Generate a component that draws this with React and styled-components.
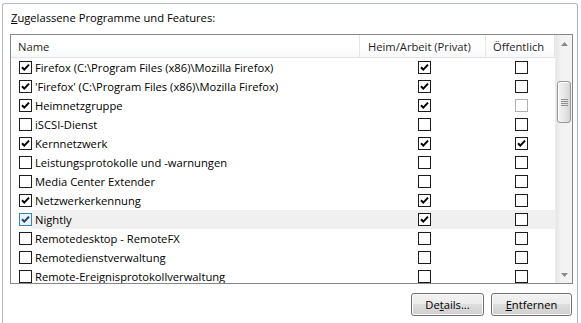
import React from 'react';
import styled, { createGlobalStyle } from 'styled-components';

const GlobalStyle = createGlobalStyle`
  html, body {
    margin: 0;
    padding: 0;
    background: #ffffff;
  }
  body {
    font-family: 'Open Sans', 'Noto Sans', 'Liberation Sans', sans-serif;
    font-size: 11.2px;
    color: #000000;
  }
`;

const Page = styled.div`
  width: 581px;
  height: 323px;
  overflow: hidden;
  padding: 3px 0 0 2px;
  box-sizing: border-box;
`;

const Frame = styled.div`
  width: 576px;
  height: 340px;
  box-sizing: border-box;
  border: 1px solid #b4b7d0;
  border-right-color: #a7a9d6;
  border-radius: 3px 3px 0 0;
  padding: 6px 0 0 7px;
`;

const Title = styled.div`
  height: 15px;
  line-height: 15px;
  padding-left: 1px;
  u {
    text-decoration: underline;
  }
`;

const ListBox = styled.div`
  margin-top: 9px;
  width: 563px;
  height: 250px;
  box-sizing: border-box;
  border: 1px solid #828790;
  display: flex;
  overflow: hidden;
`;

const Content = styled.div`
  flex: 1;
  display: flex;
  flex-direction: column;
  overflow: hidden;
`;

const Header = styled.div`
  display: flex;
  height: 23px;
  box-sizing: border-box;
  border-bottom: 1px solid #e2e2e2;
  background: linear-gradient(#ffffff, #ffffff 60%, #f7f8fa);
  flex-shrink: 0;
`;

const HeadCell = styled.div`
  width: ${(p) => p.w}px;
  box-sizing: border-box;
  padding-left: ${(p) => p.pad}px;
  border-right: 1px solid #e5e5e5;
  display: flex;
  align-items: center;
  color: #1e1e1e;
  white-space: nowrap;
`;

const Row = styled.div`
  display: flex;
  height: 19px;
  flex-shrink: 0;
  align-items: center;
`;

const NameCell = styled.div`
  width: 349px;
  height: 100%;
  display: flex;
  align-items: center;
  padding-left: 8px;
  box-sizing: border-box;
  white-space: nowrap;
`;

const Label = styled.span`
  flex: 1;
  height: 100%;
  display: flex;
  align-items: center;
  padding-left: 3px;
  background: ${(p) => (p.hot ? '#f0f0f0' : 'transparent')};
`;

const CheckCell = styled.div`
  width: ${(p) => p.w}px;
  height: 100%;
  display: flex;
  align-items: center;
  justify-content: center;
  padding-left: ${(p) => p.shift || 0}px;
  box-sizing: border-box;
  background: ${(p) => (p.hot ? '#f0f0f0' : 'transparent')};
`;

const Box = styled.span`
  width: 13px;
  height: 13px;
  box-sizing: border-box;
  border: 1px solid ${(p) => (p.disabled ? '#b1b1b1' : p.hot ? '#3c7fb1' : '#1c1c1c')};
  background: ${(p) => (p.hot ? '#e9f3fb' : '#ffffff')};
  display: inline-flex;
  align-items: center;
  justify-content: center;
  flex-shrink: 0;
`;

const Check = ({ on, disabled, hot }) => (
  <Box disabled={disabled} hot={hot}>
    {on && (
      <svg width="11" height="11" viewBox="0 0 11 11">
        <path
          d="M2 5.2 L4.3 7.6 L9 2.6"
          fill="none"
          stroke={hot ? '#1d3f6b' : '#000'}
          strokeWidth="2"
        />
      </svg>
    )}
  </Box>
);

const ScrollBar = styled.div`
  width: 17px;
  display: flex;
  flex-direction: column;
  background: linear-gradient(90deg, #e6e6e6, #f2f2f2 30%, #f4f4f4);
  border-left: 1px solid #ececec;
  box-sizing: border-box;
  flex-shrink: 0;
`;

const Arrow = styled.div`
  height: 17px;
  display: flex;
  align-items: center;
  justify-content: center;
  flex-shrink: 0;
`;

const Thumb = styled.div`
  margin: 29px 1px 0 1px;
  height: 42px;
  box-sizing: border-box;
  border: 1px solid #979797;
  border-radius: 3px;
  background: linear-gradient(90deg, #f3f3f3, #e6e6e6 55%, #d5d5d5);
  box-shadow: inset 1px 1px 0 #ffffff;
  display: flex;
  align-items: center;
  justify-content: center;
`;

const Track = styled.div`
  flex: 1;
`;

const Buttons = styled.div`
  width: 562px;
  margin-top: 9px;
  display: flex;
  justify-content: flex-end;
  gap: 7px;
`;

const Button = styled.button`
  width: ${(p) => p.w}px;
  height: 23px;
  box-sizing: border-box;
  border: 1px solid #707070;
  border-radius: 3px;
  background: linear-gradient(#f2f2f2, #ebebeb 50%, #dddddd 50%, #cfcfcf);
  box-shadow: inset 0 0 0 1px #fcfcfc;
  font-family: inherit;
  font-size: 11.2px;
  color: #000;
  padding: 0;
  u {
    text-decoration: underline;
  }
`;

const rows = [
  { name: 'Firefox (C:\\Program Files (x86)\\Mozilla Firefox)', a: true, b: true, c: false },
  { name: "'Firefox' (C:\\Program Files (x86)\\Mozilla Firefox)", a: true, b: true, c: false },
  { name: 'Heimnetzgruppe', a: true, b: true, c: false, cDis: true },
  { name: 'iSCSI-Dienst', a: false, b: false, c: false },
  { name: 'Kernnetzwerk', a: true, b: true, c: true },
  { name: 'Leistungsprotokolle und -warnungen', a: false, b: false, c: false },
  { name: 'Media Center Extender', a: false, b: false, c: false },
  { name: 'Netzwerkerkennung', a: true, b: true, c: false },
  { name: 'Nightly', a: true, b: true, c: false, hot: true },
  { name: 'Remotedesktop - RemoteFX', a: false, b: false, c: false },
  { name: 'Remotedienstverwaltung', a: false, b: false, c: false },
  { name: 'Remote-Ereignisprotokollverwaltung', a: false, b: false, c: false },
];

const Tri = ({ down }) => (
  <svg width="7" height="4" viewBox="0 0 7 4">
    <path d={down ? 'M0 0 H7 L3.5 4 Z' : 'M0 4 H7 L3.5 0 Z'} fill="#8a8a8a" />
  </svg>
);

const Grip = () => (
  <svg width="7" height="7" viewBox="0 0 7 7">
    <path d="M0 0.5 H7 M0 2.5 H7 M0 4.5 H7 M0 6.5 H7" stroke="#8f8f8f" strokeWidth="1" />
  </svg>
);

export default function App() {
  return (
    <Page>
      <GlobalStyle />
      <Frame>
        <Title>
          <u>Z</u>ugelassene Programme und Features:
        </Title>
        <ListBox>
          <Content>
            <Header>
              <HeadCell w={349} pad={7}>Name</HeadCell>
              <HeadCell w={126} pad={8}>Heim/Arbeit (Privat)</HeadCell>
              <HeadCell w={69} pad={7}>Öffentlich</HeadCell>
            </Header>
            {rows.map((r) => (
              <Row key={r.name}>
                <NameCell>
                  <Check on={r.a} hot={r.hot} />
                  <Label hot={r.hot}>{r.name}</Label>
                </NameCell>
                <CheckCell w={126} shift={3} hot={r.hot}>
                  <Check on={r.b} />
                </CheckCell>
                <CheckCell w={69} shift={1} hot={r.hot}>
                  <Check on={r.c} disabled={r.cDis} />
                </CheckCell>
              </Row>
            ))}
          </Content>
          <ScrollBar>
            <Arrow>
              <Tri />
            </Arrow>
            <Thumb>
              <Grip />
            </Thumb>
            <Track />
            <Arrow>
              <Tri down />
            </Arrow>
          </ScrollBar>
        </ListBox>
        <Buttons>
          <Button w={73}>
            De<u>t</u>ails...
          </Button>
          <Button w={81}>
            <u>E</u>ntfernen
          </Button>
        </Buttons>
      </Frame>
    </Page>
  );
}
